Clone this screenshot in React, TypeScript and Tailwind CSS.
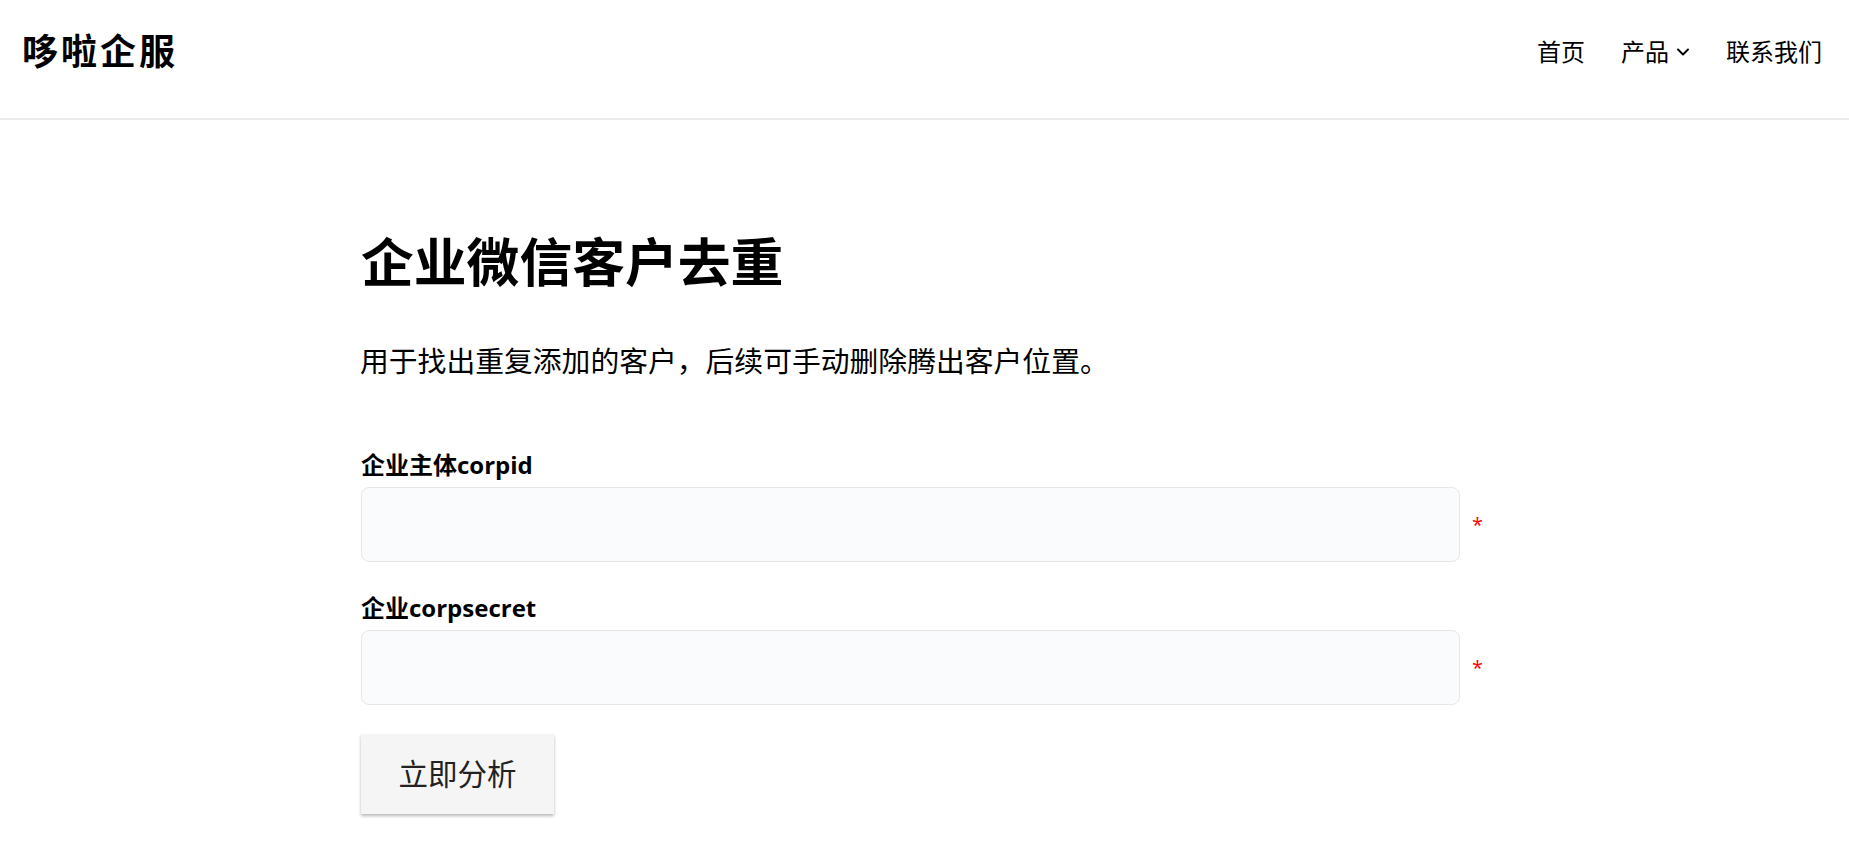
import { ChevronDown } from "lucide-react";

const fontStack = { fontFamily: '"Open Sans", "Noto Sans CJK SC", sans-serif' };

function Field({ label }: { label: string }) {
  return (
    <div className="mb-7">
      <label className="mb-1 block text-[24px] leading-[36px] font-bold text-black">{label}</label>
      <div className="flex items-center">
        <input className="h-[75px] w-[1099px] rounded-lg border border-gray-200 bg-[#fafbfc]" />
        <span className="ml-3 text-[20px] text-[#ff0000]">*</span>
      </div>
    </div>
  );
}

export default function App() {
  return (
    <div className="min-h-[857px] overflow-hidden bg-white text-black" style={fontStack}>
      <header className="flex h-[120px] items-center justify-between border-b-2 border-[#ececec] pb-[15px] pl-[22px] pr-[27px]">
        <div className="text-[36px] font-bold tracking-[3px]">哆啦企服</div>
        <nav className="flex items-center gap-9 text-[24px]">
          <a>首页</a>
          <a className="flex items-center gap-1">
            产品
            <ChevronDown size={20} strokeWidth={2.25} className="-mr-[3px]" />
          </a>
          <a>联系我们</a>
        </nav>
      </header>
      <main className="mx-auto w-[1127px] pt-[104px]">
        <h1 className="text-[52.8px] leading-[76px] font-bold">企业微信客户去重</h1>
        <p className="mt-[41px] -ml-px text-[28.8px] leading-[40px]">用于找出重复添加的客户，后续可手动删除腾出客户位置。</p>
        <form className="mt-[66px]">
          <Field label="企业主体corpid" />
          <Field label="企业corpsecret" />
          <button
            type="button"
            className="mt-px h-[80px] w-[193px] bg-[#f5f5f5] text-[29.5px] text-[#222] shadow-[0_2px_3px_rgba(0,0,0,0.28)]"
          >
            立即分析
          </button>
        </form>
      </main>
    </div>
  );
}
